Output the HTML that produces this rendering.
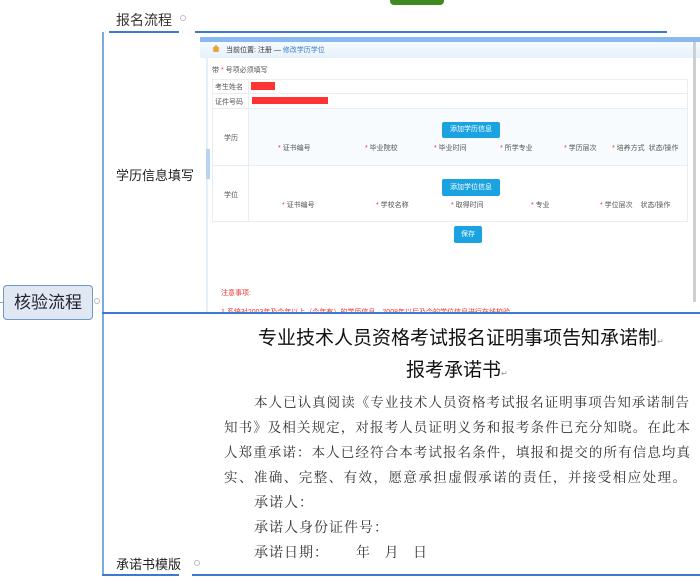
<!DOCTYPE html>
<html><head><meta charset="utf-8"><style>
*{margin:0;padding:0;box-sizing:border-box}
body{width:700px;height:586px;background:#fff;position:relative;overflow:hidden;font-family:"Liberation Sans","Noto Sans CJK SC",sans-serif;color:#222}
.a{position:absolute}
.s{font-size:7px;color:#555;white-space:nowrap}
.r{color:#e33}
.btn{position:absolute;background:#1aa3e0;color:#fff;font-size:7px;text-align:center;border-radius:2px}
.doc{font-family:"Liberation Serif","Noto Serif CJK SC",serif;font-size:14px;color:#333;white-space:nowrap}
.j{text-align:justify;text-align-last:justify;white-space:normal;letter-spacing:0}
</style></head><body>
<div class="a" style="left:390px;top:-4px;width:54px;height:9px;background:#3f8a1f;border-radius:4px"></div>
<div class="a" style="left:116px;top:10px;font-size:14px;color:#333">报名流程</div>
<div class="a" style="left:180px;top:15px;width:6px;height:6px;border:1px solid #bbb;border-radius:50%"></div>
<div class="a" style="left:109px;top:31px;width:70px;height:2px;background:#3a7bd0"></div>
<div class="a" style="left:195px;top:31px;width:472px;height:2px;background:#3a7bd0"></div>
<div class="a" style="left:102px;top:32px;width:2px;height:544px;background:#7fa9dc"></div>
<div class="a" style="left:0;top:302px;width:4px;height:1px;background:#9ab"></div>
<div class="a" style="left:3px;top:285px;width:90px;height:35px;background:#dfe8f3;border:1px solid #6f98cc;border-radius:4px;font-size:17px;color:#223;text-align:center;line-height:33px">核验流程</div>
<div class="a" style="left:94px;top:298px;width:6px;height:6px;border:1px solid #bbb;border-radius:50%"></div>
<div class="a" style="left:116px;top:165px;font-size:13px;color:#222">学历信息填写</div>
<div class="a" style="left:200px;top:37px;width:500px;height:276px;background:#fff;overflow:hidden">
 <div class="a" style="left:0;top:0;width:500px;height:5px;background:#8ab9ef"></div>
 <div class="a" style="left:0;top:5px;width:500px;height:16px;background:linear-gradient(#f5fafe,#e6f1fb)"></div>
 <div class="a" style="left:12px;top:8px;width:8px;height:7px;background:#e9a43a;clip-path:polygon(50% 0,100% 50%,85% 50%,85% 100%,15% 100%,15% 50%,0 50%)"></div>
 <div class="a s" style="left:26px;top:8px;color:#333">当前位置: 注册 — <span style="color:#3a7bc8">修改学历学位</span></div>
 <div class="a" style="left:6px;top:21px;width:2px;height:255px;background:#e6eef6"></div>
 <div class="a" style="left:6px;top:112px;width:4px;height:30px;background:#b8d3ee"></div>
 <div class="a s" style="left:12px;top:28px">带 <span class="r">*</span> 号项必须填写</div>
 <div class="a" style="left:12px;top:42px;width:476px;height:143px;border:1px solid #e8eef4"></div>
 <div class="a" style="left:48px;top:42px;width:1px;height:143px;background:#e8eef4"></div>
 <div class="a" style="left:12px;top:56px;width:476px;height:1px;background:#e8eef4"></div>
 <div class="a" style="left:12px;top:71px;width:476px;height:1px;background:#e8eef4"></div>
 <div class="a" style="left:12px;top:128px;width:476px;height:1px;background:#e8eef4"></div>
 <div class="a" style="left:49px;top:72px;width:438px;height:56px;background:#f7fbfd"></div>
 <div class="a s" style="left:15px;top:45px">考生姓名</div>
 <div class="a" style="left:51px;top:45px;width:24px;height:8px;background:#f33"></div>
 <div class="a s" style="left:15px;top:60px">证件号码</div>
 <div class="a" style="left:52px;top:60px;width:76px;height:7px;background:#f33"></div>
 <div class="a s" style="left:24px;top:96px">学历</div>
 <div class="btn" style="left:242px;top:85px;width:58px;height:16px;line-height:16px">添加学历信息</div>
 <div class="a s" style="left:78px;top:106px"><span class="r">*</span> 证书编号</div>
 <div class="a s" style="left:165px;top:106px"><span class="r">*</span> 毕业院校</div>
 <div class="a s" style="left:234px;top:106px"><span class="r">*</span> 毕业时间</div>
 <div class="a s" style="left:300px;top:106px"><span class="r">*</span> 所学专业</div>
 <div class="a s" style="left:364px;top:106px"><span class="r">*</span> 学历层次</div>
 <div class="a s" style="left:412px;top:106px"><span class="r">*</span> 培养方式 &nbsp;状态/操作</div>
 <div class="a s" style="left:24px;top:153px">学位</div>
 <div class="btn" style="left:242px;top:142px;width:58px;height:17px;line-height:17px">添加学位信息</div>
 <div class="a s" style="left:82px;top:163px"><span class="r">*</span> 证书编号</div>
 <div class="a s" style="left:176px;top:163px"><span class="r">*</span> 学校名称</div>
 <div class="a s" style="left:251px;top:163px"><span class="r">*</span> 取得时间</div>
 <div class="a s" style="left:331px;top:163px"><span class="r">*</span> 专业</div>
 <div class="a s" style="left:400px;top:163px"><span class="r">*</span> 学位层次 &nbsp;&nbsp;&nbsp;状态/操作</div>
 <div class="btn" style="left:254px;top:189px;width:28px;height:17px;line-height:17px">保存</div>
 <div class="a s" style="left:21px;top:251px;color:#e33">注意事项:</div>
 <div class="a s" style="left:21px;top:270px;color:#e33">1.系统对2003年及今年以上（今年有）的学历信息，2008年以后及今的学位信息进行在线校验</div>
 <div class="a" style="left:493px;top:5px;width:3px;height:260px;background:#cfcfcf"></div>
</div>
<div class="a" style="left:102px;top:312px;width:598px;height:2px;background:#3a7bd0"></div>
<div class="a" style="left:258px;top:323px;font-size:19px;color:#111;font-family:'Liberation Sans','Noto Sans CJK SC',sans-serif;white-space:nowrap">专业技术人员资格考试报名证明事项告知承诺制<span style="font-size:8px;color:#999">↵</span></div>
<div class="a" style="left:406px;top:355px;font-size:19px;color:#111;font-family:'Liberation Sans','Noto Sans CJK SC',sans-serif">报考承诺书<span style="font-size:8px;color:#999">↵</span></div>
<div class="a doc j" style="left:254px;top:391px;width:435px;font-size:13.5px">本人已认真阅读《专业技术人员资格考试报名证明事项告知承诺制告</div>
<div class="a doc j" style="left:224px;top:416px;width:466px;font-size:13.5px">知书》及相关规定，对报考人员证明义务和报考条件已充分知晓。在此本</div>
<div class="a doc j" style="left:224px;top:441px;width:466px;font-size:13.5px">人郑重承诺：本人已经符合本考试报名条件，填报和提交的所有信息均真</div>
<div class="a doc j" style="left:224px;top:466px;width:462px;font-size:13.5px">实、准确、完整、有效，愿意承担虚假承诺的责任，并接受相应处理。</div>
<div class="a doc" style="left:254px;top:492px;letter-spacing:1px">承诺人：</div>
<div class="a doc" style="left:254px;top:517px;letter-spacing:1px">承诺人身份证件号：</div>
<div class="a doc" style="left:254px;top:542px;letter-spacing:1px">承诺日期：&nbsp;&nbsp;&nbsp;&nbsp;&nbsp;&nbsp;年&nbsp;&nbsp;&nbsp;月&nbsp;&nbsp;&nbsp;日</div>
<div class="a" style="left:116px;top:554px;font-size:13px;color:#222">承诺书模版</div>
<div class="a" style="left:194px;top:560px;width:6px;height:6px;border:1px solid #bbb;border-radius:50%"></div>
<div class="a" style="left:102px;top:574px;width:77px;height:2px;background:#3a7bd0"></div>
<div class="a" style="left:192px;top:574px;width:508px;height:2px;background:#3a7bd0"></div>
</body></html>
